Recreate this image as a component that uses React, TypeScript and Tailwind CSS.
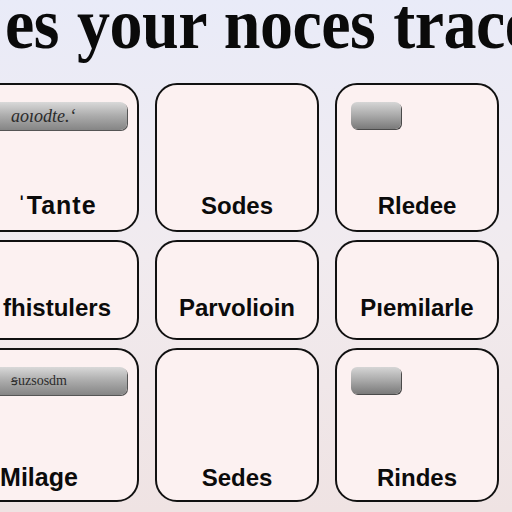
import React from "react";

type Card = { label: string; bar?: "wide" | "small"; barText?: string; barTextClass?: string; labelClass?: string };

const rows: { h: string; pb: string; cards: Card[] }[] = [
  {
    h: "h-[149px]",
    pb: "pb-[12px]",
    cards: [
      { label: "ˈTante", bar: "wide", barText: "aoıodte.‘", barTextClass: "text-[18px] italic", labelClass: "tracking-[1px] text-[25px]" },
      { label: "Sodes" },
      { label: "Rledee", bar: "small" },
    ],
  },
  {
    h: "h-[100px]",
    pb: "pb-[18px]",
    cards: [{ label: "fhistulers" }, { label: "Parvolioin" }, { label: "Pıemilarle" }],
  },
  {
    h: "h-[154px]",
    pb: "pb-[10px]",
    cards: [
      { label: "Milage", bar: "wide", barText: "ꞩuzsosdm", barTextClass: "text-[14px]", labelClass: "-ml-[36px] text-[25px]" },
      { label: "Sedes" },
      { label: "Rindes", bar: "small" },
    ],
  },
];

function Bar({ kind, text, textClass }: { kind: "wide" | "small"; text?: string; textClass?: string }) {
  if (kind === "small") {
    return (
      <div className="ml-[14px] mt-[17px] h-[27px] w-[50px] rounded-[6px] bg-gradient-to-b from-[#d6d6d6] via-[#a9a9a9] to-[#7a7a7a] shadow-[1px_1px_0_#4a4a4a]" />
    );
  }
  return (
    <div className="ml-[10px] mr-[10px] mt-[17px] flex h-[28px] items-center rounded-r-[7px] bg-gradient-to-b from-[#d9d9d9] via-[#ababab] to-[#858585] pl-[24px] shadow-[1px_1px_0_#555]">
      <span className={`font-['Liberation_Serif',serif] leading-none text-[#2b2b2b] ${textClass}`}>{text}</span>
    </div>
  );
}

export default function App() {
  return (
    <div className="relative h-[512px] w-[512px] overflow-hidden bg-gradient-to-b from-[#e9ebf8] via-[#f1ebef] to-[#efe3e3]">
      <div className="h-[83px] overflow-hidden">
        <div className="-mt-[13px] ml-[5px] origin-top scale-y-[1.1] whitespace-nowrap font-['Liberation_Serif',serif] text-[66px] font-bold leading-none tracking-[-0.5px] text-[#0a0a0a] [word-spacing:2px]">
          es your noces trace
        </div>
      </div>
      <div className="-ml-[25px] flex flex-col gap-[8px]">
        {rows.map((r, i) => (
          <div key={i} className={`flex gap-[16px] ${r.h}`}>
            {r.cards.map((c, j) => (
              <div
                key={j}
                className={`flex w-[164px] shrink-0 flex-col rounded-[22px] border-2 border-[#111] bg-[#fcf1f1] ${r.pb}`}
              >
                {c.bar ? <Bar kind={c.bar} text={c.barText} textClass={c.barTextClass} /> : null}
                <div className="flex-1" />
                <div
                  className={`text-center font-['Liberation_Sans',Arial,sans-serif] font-bold leading-none text-[#0b0b0b] ${c.labelClass ?? "text-[24px]"}`}
                >
                  {c.label}
                </div>
              </div>
            ))}
          </div>
        ))}
      </div>
    </div>
  );
}
